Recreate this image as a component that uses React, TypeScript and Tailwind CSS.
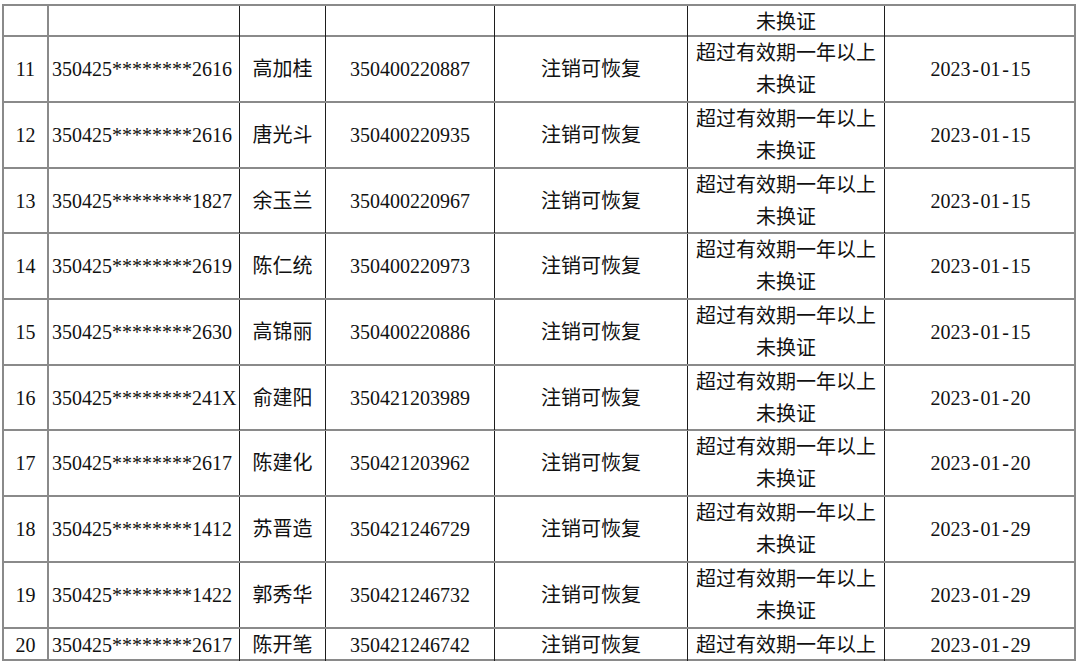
const rows = [
  { no: "11", id: "350425********2616", name: "高加桂", code: "350400220887", date: "2023-01-15", h: "h-[66px]" },
  { no: "12", id: "350425********2616", name: "唐光斗", code: "350400220935", date: "2023-01-15", h: "h-[66px]" },
  { no: "13", id: "350425********1827", name: "余玉兰", code: "350400220967", date: "2023-01-15", h: "h-[65px]" },
  { no: "14", id: "350425********2619", name: "陈仁统", code: "350400220973", date: "2023-01-15", h: "h-[66px]" },
  { no: "15", id: "350425********2630", name: "高锦丽", code: "350400220886", date: "2023-01-15", h: "h-[66px]" },
  { no: "16", id: "350425********241X", name: "俞建阳", code: "350421203989", date: "2023-01-20", h: "h-[65px]" },
  { no: "17", id: "350425********2617", name: "陈建化", code: "350421203962", date: "2023-01-20", h: "h-[66px]" },
  { no: "18", id: "350425********1412", name: "苏晋造", code: "350421246729", date: "2023-01-29", h: "h-[66px]" },
  { no: "19", id: "350425********1422", name: "郭秀华", code: "350421246732", date: "2023-01-29", h: "h-[66px]" },
];

const row = "grid grid-cols-[45px_191px_86px_169px_193px_197px_191px] border-b-2 border-b-[#8a8a8a]";
const cell = "flex flex-col items-center justify-center border-r border-r-[#1e1e1e] text-center";
const first = "flex items-center justify-center border-r-2 border-r-[#8a8a8a]";
const idCell = "flex items-center border-r border-r-[#1e1e1e] pl-[3px]";
const last = "flex items-center justify-center";

// the source font gives "-" the same half-em width as a digit
function DateText({ value }: { value: string }) {
  const parts = value.split("-");
  return (
    <span>
      {parts.map((p, i) => (
        <span key={i}>
          {i > 0 && <span className="inline-block w-[10px] text-center">-</span>}
          {p}
        </span>
      ))}
    </span>
  );
}

export default function App() {
  return (
    <div className="h-[662px] w-[1080px] overflow-hidden bg-white pl-[2px] pt-[4px] text-[20px] leading-[32px] text-[#111] [font-family:'Liberation_Serif','Noto_Sans_CJK_SC',serif]">
      <div className="w-[1074px] border-x-2 border-t-2 border-[#8a8a8a]">
        <div className={`${row} h-[31px]`}>
          <div className={first} />
          <div className={idCell} />
          <div className={cell} />
          <div className={cell} />
          <div className={cell} />
          <div className={`${cell} pb-[2px]`}>未换证</div>
          <div className={last} />
        </div>
        {rows.map((r) => (
          <div key={r.no} className={`${row} ${r.h}`}>
            <div className={first}>{r.no}</div>
            <div className={idCell}>{r.id}</div>
            <div className={cell}>{r.name}</div>
            <div className={cell}>{r.code}</div>
            <div className={cell}>注销可恢复</div>
            <div className={cell}>
              <span>超过有效期一年以上</span>
              <span>未换证</span>
            </div>
            <div className={last}>
              <DateText value={r.date} />
            </div>
          </div>
        ))}
        <div className={`${row} h-[32px]`}>
          <div className={first}>20</div>
          <div className={idCell}>350425********2617</div>
          <div className={cell}>陈开笔</div>
          <div className={cell}>350421246742</div>
          <div className={cell}>注销可恢复</div>
          <div className={cell}>超过有效期一年以上</div>
          <div className={last}>
            <DateText value="2023-01-29" />
          </div>
        </div>
      </div>
    </div>
  );
}
